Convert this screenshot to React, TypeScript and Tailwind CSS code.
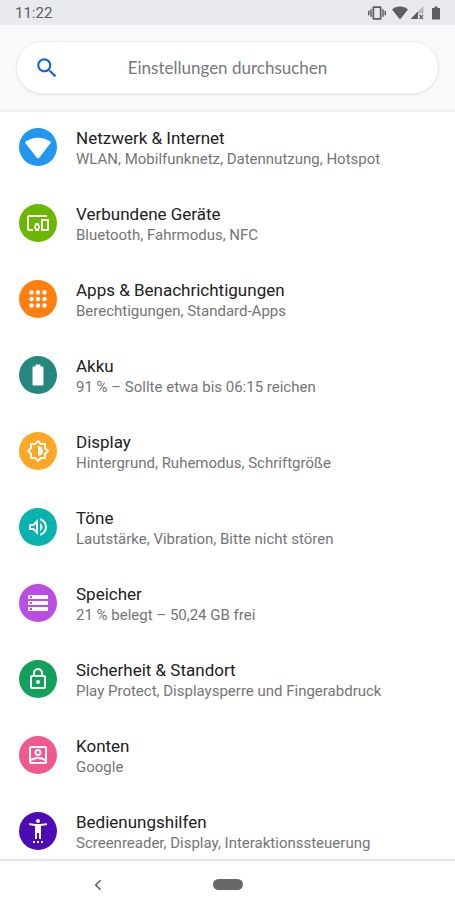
import type { ReactNode } from "react";

type Item = { title: string; summary: string; color: string; icon: ReactNode };

const items: Item[] = [
  {
    title: "Netzwerk & Internet",
    summary: "WLAN, Mobilfunknetz, Datennutzung, Hotspot",
    color: "bg-[#2196f3]",
    icon: <path d="M12 23.400c-.5 0-.9-.2-1.200-.6L-.5 8.300c-.4-.6-.3-1.300.2-1.700C3.200 4 7.400 2.700 12 2.700s8.800 1.300 12.300 3.900c.5.4.6 1.100.2 1.700L13.200 22.800c-.3.4-.7.6-1.200.6z" />,
  },
  {
    title: "Verbundene Geräte",
    summary: "Bluetooth, Fahrmodus, NFC",
    color: "bg-[#6bb700]",
    icon: <path d="M3 6h18V4H3c-1.100 0-2 .9-2 2v12c0 1.100.9 2 2 2h4v-2H3V6zm10 6H9v1.780c-.61.55-1 1.330-1 2.220s.39 1.670 1 2.220V20h4v-1.780c.61-.55 1-1.340 1-2.220s-.39-1.670-1-2.220V12zm-2 5.500c-.83 0-1.500-.67-1.500-1.500s.67-1.500 1.500-1.500 1.500.67 1.500 1.500-.67 1.500-1.500 1.500zM22 8h-6c-.5 0-1 .5-1 1v10c0 .5.5 1 1 1h6c.5 0 1-.5 1-1V9c0-.5-.5-1-1-1zm-1 10h-4v-8h4v8z" />,
  },
  {
    title: "Apps & Benachrichtigungen",
    summary: "Berechtigungen, Standard-Apps",
    color: "bg-[#ff7f0e]",
    icon: [5.5, 12, 18.5].flatMap((y) => [5.5, 12, 18.5].map((x) => <circle key={`${x}-${y}`} cx={x} cy={y} r="2.200" />)),
  },
  {
    title: "Akku",
    summary: "91 % – Sollte etwa bis 06:15 reichen",
    color: "bg-[#26877e]",
    icon: <path d="M16.200 3.500H14.500V1.500h-5v2H7.800c-.8 0-1.300.5-1.300 1.300v16.400c0 .8.5 1.300 1.300 1.300h8.400c.8 0 1.300-.5 1.300-1.300V4.800c0-.8-.5-1.300-1.300-1.300z" />,
  },
  {
    title: "Display",
    summary: "Hintergrund, Ruhemodus, Schriftgröße",
    color: "bg-[#fea725]",
    icon: <path d="M20 8.690V4h-4.690L12 .69 8.690 4H4v4.690L.69 12 4 15.310V20h4.690L12 23.310 15.310 20H20v-4.690L23.310 12 20 8.690zm-2 5.790V18h-3.520L12 20.480 9.520 18H6v-3.520L3.520 12 6 9.520V6h3.520L12 3.520 14.480 6H18v3.520L20.480 12 18 14.480zM12 7v10c2.760 0 5-2.240 5-5s-2.240-5-5-5z" />,
  },
  {
    title: "Töne",
    summary: "Lautstärke, Vibration, Bitte nicht stören",
    color: "bg-[#08b2ae]",
    icon: <path d="M3 9v6h4l5 5V4L7 9H3zm7-.17v6.340L7.830 13H5v-2h2.830L10 8.830zM16.500 12c0-1.770-1.020-3.290-2.500-4.030v8.050c1.480-.73 2.500-2.250 2.500-4.020zM14 3.230v2.060c2.890.86 5 3.540 5 6.710s-2.110 5.850-5 6.710v2.060c4.010-.91 7-4.490 7-8.770s-2.990-7.860-7-8.770z" />,
  },
  {
    title: "Speicher",
    summary: "21 % belegt – 50,24 GB frei",
    color: "bg-[#bb4ce4]",
    icon: <path d="M2 20h20v-4H2v4zm2-3h2v2H4v-2zM2 4v4h20V4H2zm4 3H4V5h2v2zm-4 7h20v-4H2v4zm2-3h2v2H4v-2z" />,
  },
  {
    title: "Sicherheit & Standort",
    summary: "Play Protect, Displaysperre und Fingerabdruck",
    color: "bg-[#12a05a]",
    icon: <path d="M18 8h-1V6c0-2.760-2.240-5-5-5S7 3.240 7 6v2H6c-1.100 0-2 .9-2 2v10c0 1.100.9 2 2 2h12c1.100 0 2-.9 2-2V10c0-1.100-.9-2-2-2zM9 6c0-1.660 1.340-3 3-3s3 1.340 3 3v2H9V6zm9 14H6V10h12v10zm-6-3c1.100 0 2-.9 2-2s-.9-2-2-2-2 .9-2 2 .9 2 2 2z" />,
  },
  {
    title: "Konten",
    summary: "Google",
    color: "bg-[#f0588f]",
    icon: <path d="M19 3H5c-1.110 0-2 .9-2 2v14c0 1.100.89 2 2 2h14c1.100 0 2-.9 2-2V5c0-1.100-.9-2-2-2zm0 2v10.790C16.520 14.370 13.230 14 12 14s-4.520.37-7 1.790V5h14zM5 19v-.77C6.740 16.660 10.320 16 12 16s5.260.66 7 2.230V19H5zm7-6c1.940 0 3.500-1.560 3.500-3.500S13.940 6 12 6 8.500 7.560 8.500 9.500 10.060 13 12 13zm0-5c.83 0 1.500.67 1.500 1.500S12.830 11 12 11s-1.500-.67-1.500-1.500S11.170 8 12 8z" />,
  },
  {
    title: "Bedienungshilfen",
    summary: "Screenreader, Display, Interaktionssteuerung",
    color: "bg-[#4d0bb8]",
    icon: <path d="M20.500 4c-2.610.7-5.670 1-8.500 1s-5.890-.3-8.500-1L3 6c1.860.5 4 .83 6 1v13h2v-6h2v6h2V7c2-.17 4.140-.5 6-1l-.5-2zM12 4c1.100 0 2-.9 2-2s-.9-2-2-2-2 .9-2 2 .9 2 2 2zM7 24h2v-2H7v2zm4 0h2v-2h-2v2zm4 0h2v-2h-2v2z" />,
  },
];

function StatusBar() {
  return (
    <div className="flex h-[25px] shrink-0 items-center justify-between bg-[#e8eaed] px-[15px] text-[#5b5e62]">
      <time className="text-[15px] leading-5">11:22</time>
      <div className="flex items-center">
        <svg className="mr-[6px] h-[18px] w-[18px]" viewBox="0 0 24 24" fill="currentColor" role="img" aria-label="Vibration">
          <path d="M0 15h2V9H0v6zm3 2h2V7H3v10zm19-8v6h2V9h-2zm-3 8h2V7h-2v10zM16.500 3h-9C6.670 3 6 3.670 6 4.500v15c0 .83.67 1.500 1.500 1.500h9c.83 0 1.500-.67 1.500-1.500v-15c0-.83-.67-1.500-1.500-1.500zM15.700 18.700H8.300V5.300h7.400v13.400z" />
        </svg>
        <svg className="mr-[2px] h-[14px] w-[16px]" viewBox="0 0 16 14" fill="currentColor" role="img" aria-label="WLAN">
          <path d="M8 13.500 0 3.400C2.300 1.600 5 .6 8 .6s5.700 1 8 2.800z" />
        </svg>
        <svg className="mr-[8px] h-[14px] w-[14px]" viewBox="0 0 14 14" fill="currentColor" role="img" aria-label="Mobilfunk">
          <path d="M13.500 0v7.500H8V13H.5z" opacity=".35" />
          <path d="M8 5.500V13H.5z" />
          <path d="m9.500 9 3.500 4m0-4-3.500 4" fill="none" stroke="currentColor" strokeWidth="1.200" />
        </svg>
        <svg className="h-[14px] w-[8px]" viewBox="0 0 8 14" fill="currentColor" role="img" aria-label="Akku">
          <path d="M2.500 .5h3V2H8v11.500H0V2h2.500z" />
        </svg>
      </div>
    </div>
  );
}

export default function App() {
  return (
    <div className="flex h-screen flex-col overflow-hidden bg-white font-['Roboto',sans-serif]">
      <StatusBar />
      <header className="shrink-0 border-b-2 border-[#eff0f2] bg-[#f8f9fa] px-4 py-4">
        <label className="flex h-[53px] items-center rounded-full border border-[#ebecee] bg-white px-[17px] shadow-[0_1px_2px_rgba(0,0,0,0.08)]">
          <svg className="h-[26px] w-[26px] shrink-0" viewBox="0 0 24 24" fill="#1967d2" aria-hidden="true">
            <path d="M15.500 14h-.79l-.28-.27C15.410 12.590 16 11.110 16 9.500 16 5.910 13.090 3 9.500 3S3 5.910 3 9.500 5.910 16 9.500 16c1.610 0 3.090-.59 4.230-1.570l.27.28v.79l5 4.990L20.490 19l-4.990-5zm-6 0C7.010 14 5 11.990 5 9.500S7.010 5 9.500 5 14 7.010 14 9.500 11.990 14 9.500 14z" />
          </svg>
          <input
            type="text"
            aria-label="Einstellungen durchsuchen"
            placeholder="Einstellungen durchsuchen"
            className="mr-[26px] min-w-0 flex-1 bg-transparent text-center font-['Lato',sans-serif] text-[17px] leading-6 text-[#5f6368] outline-none placeholder:text-[#75787c]"
          />
        </label>
      </header>
      <main className="min-h-0 flex-1 overflow-hidden">
        <ul>
          {items.map((item) => (
            <li key={item.title}>
              <a href="#" className="flex h-19 items-start gap-[19px] px-[19px] pt-4">
                <span className={`flex h-[38px] w-[38px] shrink-0 items-center justify-center rounded-full ${item.color}`}>
                  <svg className="h-6 w-6 overflow-visible" viewBox="0 0 24 24" fill="white" aria-hidden="true">
                    {item.icon}
                  </svg>
                </span>
                <span className="flex min-w-0 flex-col whitespace-nowrap">
                  <span className="text-[17px] leading-5 text-[#212121]">{item.title}</span>
                  <span className="text-[15px] leading-[22px] text-[#757575]">{item.summary}</span>
                </span>
              </a>
            </li>
          ))}
        </ul>
      </main>
      <nav className="grid h-[51px] shrink-0 grid-cols-7 items-center border-t-2 border-[#e4e4e4] bg-white pb-[2px]" aria-label="Systemnavigation">
        <button type="button" aria-label="Zurück" className="col-start-2 flex h-10 items-center justify-center">
          <svg className="h-3 w-3" viewBox="0 0 12 12" fill="none" stroke="#5f5f5f" strokeWidth="1.600" aria-hidden="true">
            <path d="M8.500 1.200 3.700 6l4.800 4.800" />
          </svg>
        </button>
        <button type="button" aria-label="Startbildschirm" className="col-start-4 flex h-10 items-center justify-center">
          <span className="h-[11px] w-[30px] rounded-full bg-[#686868]" />
        </button>
      </nav>
    </div>
  );
}
